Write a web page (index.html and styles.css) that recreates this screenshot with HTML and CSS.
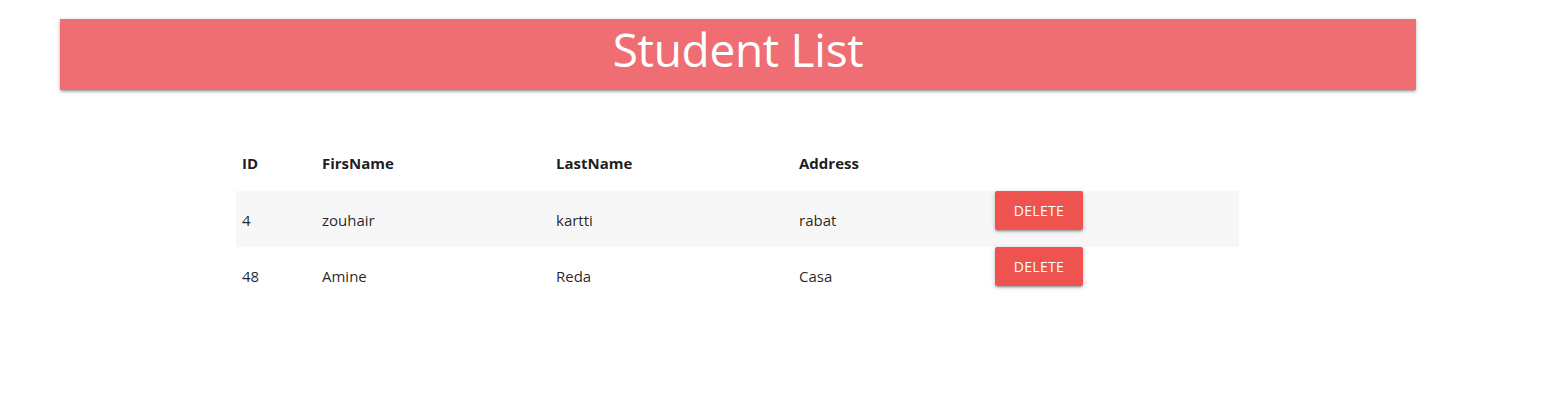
FILE: index.html
```html
<!DOCTYPE html>
<html>
<head>
<meta charset="utf-8">
<link rel="stylesheet" href="styles.css">
</head>
<body>
<div class="page">
  <header class="banner"><h1 class="title">Student List</h1></header>
  <div class="table-wrap">
    <table class="students">
      <colgroup>
        <col class="c-id"><col class="c-first"><col class="c-last"><col class="c-addr"><col class="c-act">
      </colgroup>
      <thead>
        <tr><th>ID</th><th>FirsName</th><th>LastName</th><th>Address</th><th></th></tr>
      </thead>
      <tbody>
        <tr class="striped"><td>4</td><td>zouhair</td><td>kartti</td><td>rabat</td><td class="act"><button class="btn">DELETE</button></td></tr>
        <tr><td>48</td><td>Amine</td><td>Reda</td><td>Casa</td><td class="act"><button class="btn">DELETE</button></td></tr>
      </tbody>
    </table>
  </div>
</div>
</body>
</html>
```

FILE: styles.css
```css
html, body {
  margin: 0;
  padding: 0;
  background: #fff;
}
body {
  font-family: "Open Sans", "Noto Sans", sans-serif;
  color: rgba(0, 0, 0, 0.87);
}
.page {
  padding: 19px 0 0 60px;
}
.banner {
  width: 1356px;
  height: 71px;
  background: #ee6e73;
  box-shadow: 0 2px 2px 0 rgba(0,0,0,0.14), 0 3px 1px -2px rgba(0,0,0,0.12), 0 1px 5px 0 rgba(0,0,0,0.2);
  display: flex;
  justify-content: center;
}
.title {
  margin: 0;
  color: #fff;
  font-weight: 400;
  font-size: 46px;
  line-height: 60px;
  letter-spacing: -0.3px;
}
.table-wrap {
  padding: 45px 0 0 176px;
}
.students {
  width: 1003px;
  border-collapse: collapse;
  font-size: 15px;
  table-layout: fixed;
}
.c-id { width: 80px; }
.c-first { width: 234px; }
.c-last { width: 243px; }
.c-addr { width: 196px; }
.c-act { width: 250px; }
.students th, .students td {
  box-sizing: border-box;
  text-align: left;
  padding: 0 6px;
  height: 56px;
  vertical-align: middle;
}
.students th {
  font-weight: 700;
  color: rgba(0,0,0,0.9);
}
.students td {
  padding-top: 2px;
}
.striped {
  background: #f7f7f7;
}
.students td.act {
  vertical-align: top;
  padding: 0 0 0 6px;
}
.btn {
  font-family: inherit;
  height: 39px;
  width: 88px;
  margin-top: 0;
  border: none;
  border-radius: 2px;
  background: #ef5350;
  color: #fff;
  font-size: 14px;
  letter-spacing: 0.3px;
  box-shadow: 0 2px 2px 0 rgba(0,0,0,0.14), 0 3px 1px -2px rgba(0,0,0,0.12), 0 1px 5px 0 rgba(0,0,0,0.2);
  padding: 0;
}
```
